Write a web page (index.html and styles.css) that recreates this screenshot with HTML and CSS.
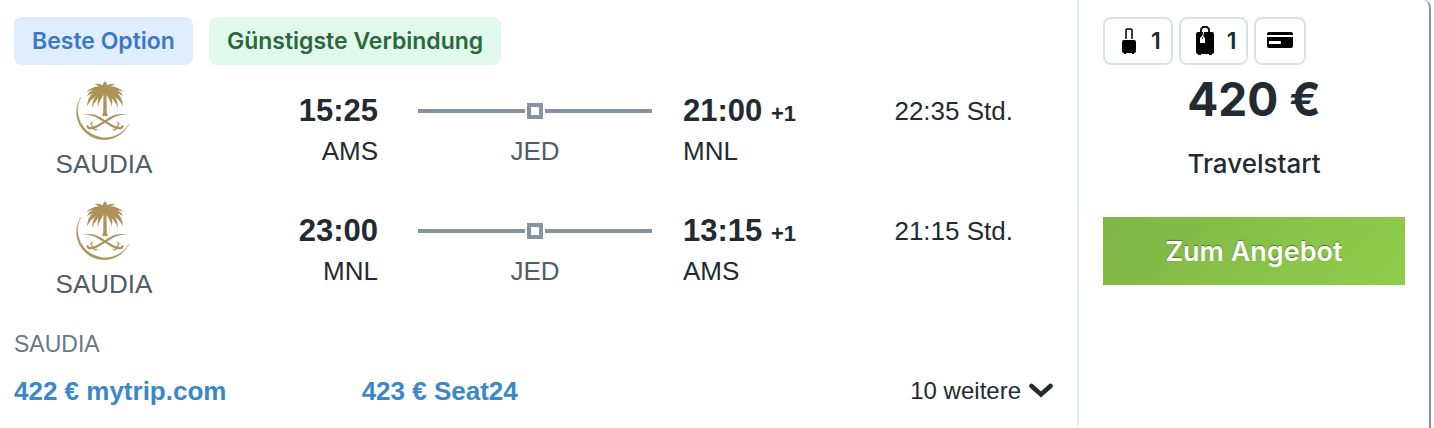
FILE: index.html
```
<!DOCTYPE html>
<html lang="de">
<head>
<meta charset="utf-8">
<title>Flugangebot</title>
<link rel="stylesheet" href="styles.css">
</head>
<body>
<svg class="defs" aria-hidden="true">
    <symbol id="saudia" viewBox="0 0 60 64">
        <path d="M7 17A27.600 27.600 0 1 0 55 44A27.540 27.540 0 0 1 7 17Z" stroke="currentColor" stroke-width=".3"/>
        <g id="fronds">
            <path d="M31 7Q27 3 20 4Q25 5 30 11Z"/>
            <path d="M31 7Q21 4 12 12Q21 8 30 12Z"/>
            <path d="M31 8Q17 7 13 16Q20 11 30 13Z"/>
            <path d="M31 9Q14 10 13 26Q19 15 30 13Z"/>
            <path d="M31 9Q19 12 18 28Q22 18 31 13Z"/>
            <path d="M31 9Q22 15 24 27Q26 19 31 13Z"/>
        </g>
        <use href="#fronds" transform="matrix(-1 0 0 1 62 0)"/>
        <path d="M31 1L33 4V9H29V4Z"/>
        <path d="M29.500 11H32.500L32.800 33L34 36H28L29.200 33Z"/>
        <g id="sword">
            <path d="M8 35Q18 32 26 37Q32 41 38 44.500Q42 47 47 47L48 45L50 46L48 49Q42 50 37 46.500Q30 42 24 38.500Q17 34 8 35Z"/>
            <path d="M39 49Q40 51 42 49L45 44Q45 42 43 43" fill="none" stroke="currentColor" stroke-width="1.200"/>
        </g>
        <use href="#sword" transform="matrix(-1 0 0 1 62 0)"/>
    </symbol>
</svg>

<div class="card">
    <div class="main">
        <div class="tags">
            <span class="tag tag-blue">Beste Option</span>
            <span class="tag tag-green">Günstigste Verbindung</span>
        </div>

        <div class="leg">
            <div class="airline">
                <svg class="logo" aria-hidden="true"><use href="#saudia"/></svg>
                <div>SAUDIA</div>
            </div>
            <div class="stop departure">
                <div class="time">15:25</div>
                <div>AMS</div>
            </div>
            <div class="route">
                <div class="line"><span class="dot"></span></div>
                <div>JED</div>
            </div>
            <div class="stop">
                <div class="time">21:00 <span class="days">+1</span></div>
                <div>MNL</div>
            </div>
            <div class="duration">22:35 Std.</div>
        </div>

        <div class="leg">
            <div class="airline">
                <svg class="logo" aria-hidden="true"><use href="#saudia"/></svg>
                <div>SAUDIA</div>
            </div>
            <div class="stop departure">
                <div class="time">23:00</div>
                <div>MNL</div>
            </div>
            <div class="route">
                <div class="line"><span class="dot"></span></div>
                <div>JED</div>
            </div>
            <div class="stop">
                <div class="time">13:15 <span class="days">+1</span></div>
                <div>AMS</div>
            </div>
            <div class="duration">21:15 Std.</div>
        </div>

        <div class="carrier">SAUDIA</div>
        <div class="offers">
            <a href="#">422 € mytrip.com</a>
            <a href="#">423 € Seat24</a>
            <button type="button" class="more">10 weitere
                <svg width="24" height="16" viewBox="0 0 24 16" aria-hidden="true"><path d="M2.500 3L12 11.500L21.500 3" fill="none" stroke="currentColor" stroke-width="4.600" stroke-linecap="round"/></svg>
            </button>
        </div>
    </div>

    <div class="side">
        <div class="extras">
            <div class="extra">
                <svg width="28" height="32" viewBox="-2 0 28 32" aria-hidden="true">
                    <path d="M9 14V5Q9 4 10 4H14Q15 4 15 5V14" fill="none" stroke="#000" stroke-width="1.500"/>
                    <path d="M7 15H17Q19 15 19 17V26Q19 28 17 28V29H15V28H9V29H7V28Q5 28 5 26V17Q5 15 7 15Z"/>
                </svg>
                1
            </div>
            <div class="extra">
                <svg width="28" height="32" viewBox="-2 0 28 32" aria-hidden="true">
                    <path d="M8 7V4L10 2H14L16 4V7" fill="none" stroke="#000" stroke-width="1.800"/>
                    <path d="M5 7H19Q21 7 21 9V27Q21 29 19 29V30H16V29H8V30H5V29Q3 29 3 27V9Q3 7 5 7Z"/>
                    <path d="M7 13L9.500 10.500L12 13V18H7Z" fill="#fff"/>
                    <path d="M9.500 12L11 5" stroke="#fff" fill="none"/>
                    <circle cx="9.500" cy="13" r=".7"/>
                </svg>
                1
            </div>
            <div class="extra">
                <svg width="28" height="32" viewBox="0 0 28 32" aria-hidden="true">
                    <path d="M1 10V9Q1 7 3 7H25Q27 7 27 9V10Z"/>
                    <path fill-rule="evenodd" d="M1 12H27V21Q27 23 25 23H3Q1 23 1 21ZM3 16V19H15V16Z"/>
                </svg>
            </div>
        </div>
        <div class="price">420 €</div>
        <div class="provider">Travelstart</div>
        <button type="button" class="book">Zum Angebot</button>
    </div>
</div>
</body>
</html>
```
FILE: styles.css
```
* {
    box-sizing: border-box;
}
body {
    margin: 0;
    background-color: #fafbfc;
    font-family: "Liberation Sans", Arial, Helvetica, sans-serif;
    font-size: 26px;
    line-height: 40px;
    color: #212b31;
}
.defs {
    display: none;
}
.card {
    display: flex;
    margin-right: 3px;
    padding-bottom: 2px;
    background-color: #fff;
    border-right: 2px solid #8494a2;
    border-top-right-radius: 8px;
}
.main {
    flex: 1;
    padding: 17px 24px 19px 14px;
}
.tags {
    display: flex;
    gap: 16px;
    margin-bottom: 15px;
}
.tag {
    padding: 1px 18px 0;
    border-radius: 8px;
    font-family: Inter, sans-serif;
    font-size: 23px;
    font-weight: 600;
    line-height: 47px;
}
.tag-blue {
    color: #3a78c9;
    background-color: #e0edfe;
}
.tag-green {
    color: #2c683c;
    background-color: #e1f9eb;
}

.leg {
    display: grid;
    grid-template-columns: 180fr 184fr 305fr 170fr 200fr;
    margin-bottom: 16px;
}
.airline {
    text-align: center;
    color: #4f5d69;
}
.logo {
    display: block;
    width: 60px;
    height: 64px;
    margin: 0 auto;
    color: #ad935a;
    fill: currentColor;
}
.stop, .route, .duration {
    padding-top: 11px;
}
.stop {
    white-space: nowrap;
}
.departure {
    text-align: right;
}
.time {
    height: 40px;
    font-size: 31px;
    font-weight: bold;
}
.days {
    font-size: 22px;
    line-height: 32px;
}
.route {
    padding-left: 40px;
    padding-right: 31px;
    text-align: center;
    color: #4f5d69;
}
.line {
    display: flex;
    align-items: center;
    gap: 2px;
    height: 40px;
}
.line::before, .line::after {
    content: "";
    flex: 1;
    height: 4px;
    background-color: #8494a2;
}
.dot {
    width: 16px;
    height: 16px;
    border: 4px solid #8494a2;
}
.duration {
    padding-right: 40px;
    text-align: right;
}

.carrier {
    margin-top: 24px;
    margin-bottom: 15px;
    font-size: 23px;
    line-height: 32px;
    color: #697886;
}
.offers {
    display: grid;
    grid-template-columns: repeat(3, 1fr);
    gap: 4px;
    line-height: 32px;
}
.offers a {
    color: #3b87c8;
    font-weight: bold;
    text-decoration: none;
}
.more {
    display: flex;
    align-items: center;
    justify-content: flex-end;
    gap: 8px;
    padding: 0;
    border: 0;
    background: none;
    font: inherit;
    font-size: 24px;
    color: inherit;
    cursor: pointer;
}

.side {
    width: 352px;
    padding: 17px 24px;
    border-left: 2px solid #e4e9ed;
    font-family: Inter, sans-serif;
    text-align: center;
}
.extras {
    display: flex;
    gap: 6px;
}
.extra {
    display: flex;
    align-items: center;
    gap: 8px;
    height: 48px;
    padding: 0 10px;
    border: 2px solid #dbe2e8;
    border-radius: 8px;
    font-size: 23px;
    font-weight: 600;
}
.price {
    font-size: 46px;
    font-weight: bold;
    line-height: 68px;
}
.provider {
    margin: 15px 0 37px;
    font-size: 26px;
    font-weight: 500;
    line-height: 32px;
}
.book {
    display: block;
    width: 100%;
    height: 68px;
    border: 0;
    background: linear-gradient(135deg, #80b446, #90ce4b);
    color: #fff;
    font-family: Inter, sans-serif;
    font-size: 27px;
    font-weight: 600;
    text-shadow: 0 -1px 1px #4d7a22;
    cursor: pointer;
}
```
